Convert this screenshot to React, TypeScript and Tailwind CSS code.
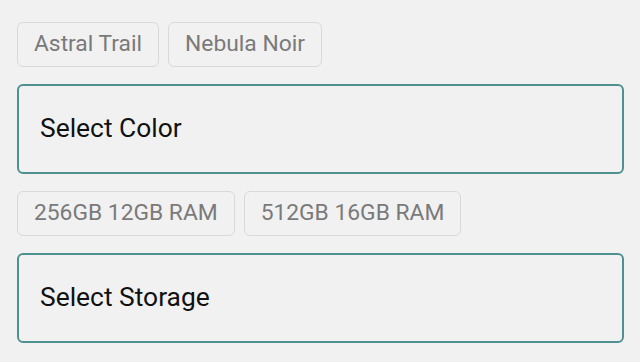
const colors = ["Astral Trail", "Nebula Noir"]
const storage = ["256GB 12GB RAM", "512GB 16GB RAM"]

function Chips({ items }: { items: string[] }) {
    return (
        <div className="flex gap-[9px]">
            {items.map((item) => (
                <div
                    key={item}
                    className="flex h-[45px] items-center rounded-[6px] border border-[#d9d9d9] px-4 text-[22.8px] text-[#7a7a7a]"
                >
                    {item}
                </div>
            ))}
        </div>
    )
}

function SelectBox({ label }: { label: string }) {
    return (
        <div className="flex h-[90px] items-center rounded-[6px] border-2 border-[#4f9191] px-[21px] text-[26.4px] text-[#111]">
            {label}
        </div>
    )
}

export default function App() {
    return (
        <div
            className="flex h-[362px] w-[640px] flex-col gap-[17px] bg-[#f1f1f1] pl-[17px] pr-[16px] pt-[22px]"
            style={{ fontFamily: "Roboto, sans-serif" }}
        >
            <Chips items={colors} />
            <SelectBox label="Select Color" />
            <Chips items={storage} />
            <SelectBox label="Select Storage" />
        </div>
    )
}
